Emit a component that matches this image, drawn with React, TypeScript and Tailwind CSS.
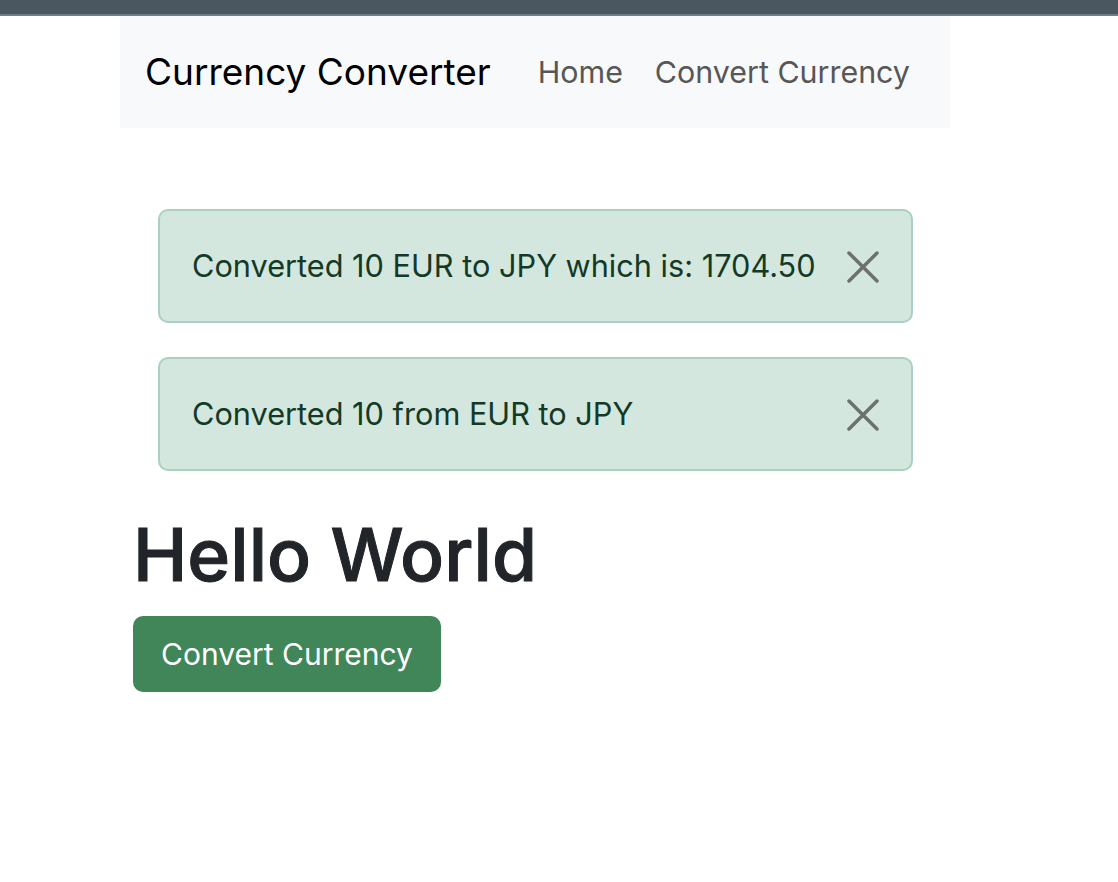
import React from "react";

function CloseX() {
  return (
    <svg width="32" height="32" viewBox="0 0 32 32" className="block">
      <path d="M2 2 L30 30 M30 2 L2 30" stroke="#6b726e" strokeWidth="3.5" strokeLinecap="round" fill="none" />
    </svg>
  );
}

function Alert({ text }: { text: string }) {
  return (
    <div className="relative flex h-[114px] w-[755px] items-center rounded-[10px] border-2 border-[#aad1bf] bg-[#d4e7de] pl-[32px] text-[#123a26]">
      <span className="text-[30.7px] leading-[48px]">{text}</span>
      <button className="absolute right-[32px] top-[40px]" aria-label="Close">
        <CloseX />
      </button>
    </div>
  );
}

export default function App() {
  return (
    <div className="min-h-[882px] bg-white font-['Inter',sans-serif]">
      <div className="h-[14px] bg-[#4a5761]" />
      <div className="h-[2px] bg-[#737c84]" />
      <div className="ml-[120px] flex h-[112px] w-[830px] items-center bg-[#f8f9fa] pl-[25px]">
        <span className="mr-[47px] text-[37px] leading-[60px] text-black">Currency Converter</span>
        <nav className="flex items-center gap-[32px] text-[30.4px] leading-[48px] text-[#575757]">
          <span>Home</span>
          <span>Convert Currency</span>
        </nav>
      </div>
      <div className="ml-[158px] mt-[81px] flex flex-col gap-[34px]">
        <Alert text="Converted 10 EUR to JPY which is: 1704.50" />
        <Alert text="Converted 10 from EUR to JPY" />
      </div>
      <div className="ml-[133px]">
        <h1 className="mt-[36px] text-[73px] font-medium leading-[96px] text-[#212529] [-webkit-text-stroke:1px_#212529]">Hello World</h1>
        <button className="mt-[13px] h-[76px] w-[308px] rounded-[10px] bg-[#408659] text-center text-[30px] leading-[48px] text-white">
          Convert Currency
        </button>
      </div>
    </div>
  );
}
